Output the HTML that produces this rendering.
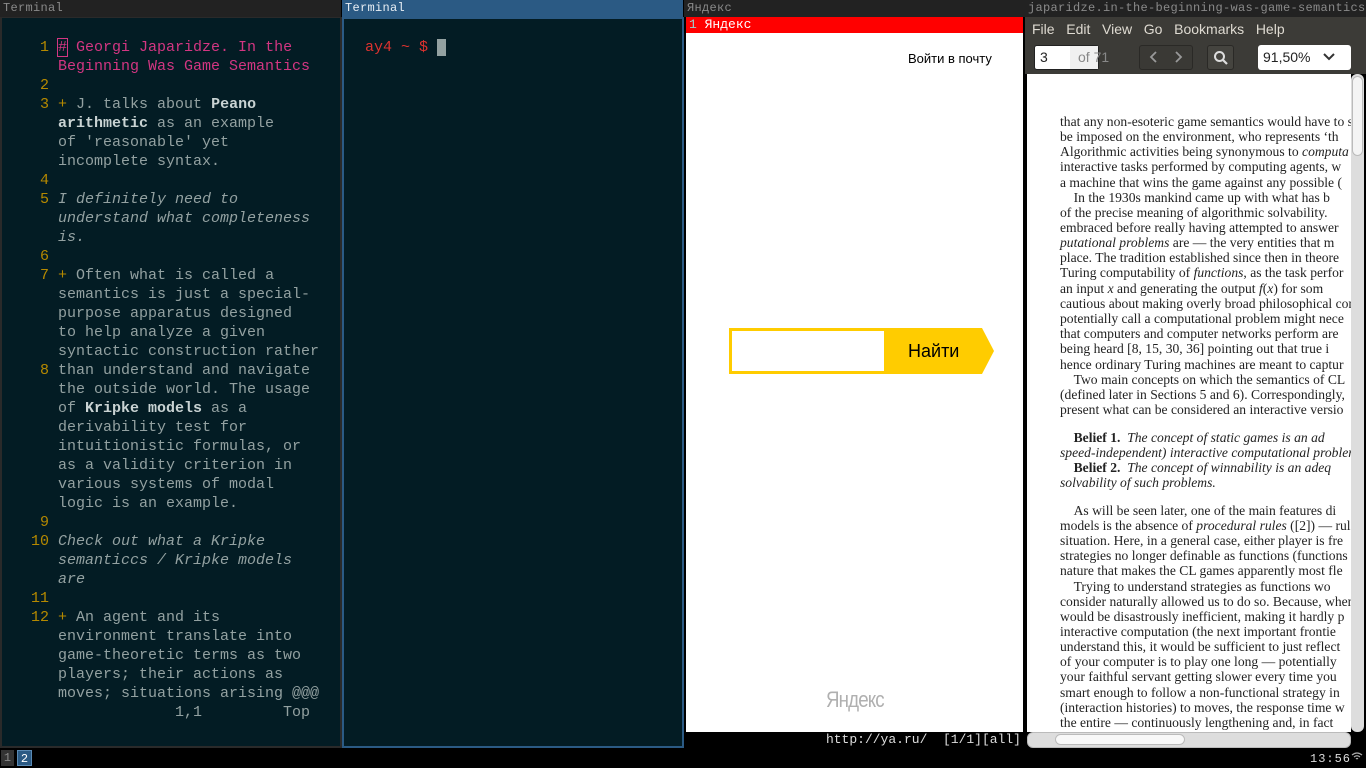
<!DOCTYPE html>
<html><head><meta charset="utf-8"><style>
*{margin:0;padding:0;box-sizing:border-box}
body{width:1366px;height:768px;background:#000;position:relative;overflow:hidden;font-family:"Liberation Sans",sans-serif}
.abs{position:absolute}
.tt{position:absolute;top:0;height:17px;font:12px/16px "Liberation Mono","DejaVu Sans Mono",monospace;color:#8a8a8a;padding-left:3px;background:#222;letter-spacing:0.3px;white-space:nowrap;overflow:hidden}
.term{font:15px/19px "Liberation Mono","DejaVu Sans Mono",monospace;color:#93a1a1;white-space:pre}
.n{color:#b58900}
.p{color:#d33682}
.b{font-weight:bold;color:#c9d3d3}
.i{font-style:italic}
.pdf div{position:absolute;left:1060px;font:13.6px/14px "Liberation Serif","DejaVu Serif",serif;color:#222;white-space:nowrap}
</style></head><body>
<!-- Terminal 1 -->
<div class="tt" style="left:0;width:341px">Terminal</div>
<div class="abs" style="left:0;top:17px;width:342px;height:731px;background:#031c24;border:2px solid #2a2a2a;border-top:1px solid #2a2a2a"></div>
<div class="abs term" style="left:22px;top:38px"><span class="n">  1 </span><span class="p" style="outline:1px solid #d33682">#</span><span class="p"> Georgi Japaridze. In the</span>
<span class="p">    Beginning Was Game Semantics</span>
<span class="n">  2</span>
<span class="n">  3 </span><span class="n">+</span> J. talks about <span class="b">Peano</span>
    <span class="b">arithmetic</span> as an example
    of 'reasonable' yet
    incomplete syntax.
<span class="n">  4</span>
<span class="n">  5 </span><span class="i">I definitely need to</span>
<span class="i">    understand what completeness</span>
<span class="i">    is.</span>
<span class="n">  6</span>
<span class="n">  7 </span><span class="n">+</span> Often what is called a
    semantics is just a special-
    purpose apparatus designed
    to help analyze a given
    syntactic construction rather
<span class="n">  8 </span>than understand and navigate
    the outside world. The usage
    of <span class="b">Kripke models</span> as a
    derivability test for
    intuitionistic formulas, or
    as a validity criterion in
    various systems of modal
    logic is an example.
<span class="n">  9</span>
<span class="n"> 10 </span><span class="i">Check out what a Kripke</span>
<span class="i">    semanticcs / Kripke models</span>
<span class="i">    are</span>
<span class="n"> 11</span>
<span class="n"> 12 </span><span class="n">+</span> An agent and its
    environment translate into
    game-theoretic terms as two
    players; their actions as
    moves; situations arising @@@
                 1,1         Top</div>
<!-- Terminal 2 -->
<div class="tt" style="left:342px;width:341px;background:#2b5a84;color:#e8eef4">Terminal</div>
<div class="abs" style="left:342px;top:17px;width:342px;height:731px;background:#031c24;border:2px solid #2b5a84"></div>
<div class="abs term" style="left:365px;top:38px"><span style="color:#dc322f">ay4 ~ $</span> <span style="background:#93a1a1"> </span></div>
<!-- Yandex -->
<div class="tt" style="left:684px;width:341px">Яндекс</div>
<div class="abs" style="left:686px;top:17px;width:337px;height:715px;background:#fff"></div>
<div class="abs" style="left:686px;top:17px;width:337px;height:16px;background:#f00;font:13px/16px 'Liberation Mono',monospace;color:#fff;padding-left:3px;white-space:pre"><span style="color:#9ccfcf">1</span> Яндекс</div>
<div class="abs" style="left:908px;top:51px;font:13px/16px 'Liberation Sans',sans-serif;color:#000">Войти в почту</div>
<div class="abs" style="left:729px;top:328px;width:158px;height:46px;border:3px solid #fc0;background:#fff"></div>
<div class="abs" style="left:886px;top:328px;width:96px;height:46px;background:#fc0;font:18px/46px 'Liberation Sans',sans-serif;color:#000;padding-left:22px">Найти</div>
<div class="abs" style="left:982px;top:328px;width:0;height:0;border-top:23px solid transparent;border-bottom:23px solid transparent;border-left:12px solid #fc0"></div>
<div class="abs" style="left:826px;top:687px;font:22px/26px 'Liberation Sans',sans-serif;color:#b0b0b0;letter-spacing:-1px;transform:scaleX(0.85);transform-origin:left">Яндекс</div>
<div class="abs" style="left:686px;top:732px;width:337px;height:16px;background:#000;font:13px/16px 'Liberation Mono',monospace;color:#ddd;text-align:right;padding-right:2px;white-space:pre">http://ya.ru/  [1/1][all]</div>
<!-- PDF -->
<div class="tt" style="left:1025px;width:341px">japaridze.in-the-beginning-was-game-semantics.p…</div>
<div class="abs" style="left:1025px;top:17px;width:341px;height:57px;background:#3c3b37"></div>
<div class="abs" style="left:1032px;top:20px;font:14px/18px 'Liberation Sans',sans-serif;color:#dfdbd2;white-space:pre">File   Edit   View   Go   Bookmarks   Help</div>
<div class="abs" style="left:1034px;top:45px;width:64px;height:25px;background:#fff;border-radius:3px;border:1px solid #222;width:65px"></div>
<div class="abs" style="left:1070px;top:46px;width:28px;height:23px;background:#f0f0f0"></div>
<div class="abs" style="left:1040px;top:48px;font:14px/19px 'Liberation Sans',sans-serif;color:#222">3</div>
<div class="abs" style="left:1078px;top:48px;font:14px/19px 'Liberation Sans',sans-serif;color:#888;white-space:nowrap">of 71</div>
<div class="abs" style="left:1139px;top:45px;width:54px;height:25px;background:#3a3935;border:1px solid #2a2926;border-radius:3px"></div>
<svg class="abs" style="left:1144px;top:49px" width="44" height="16"><path d="M12 3L7 8L12 13M32 3L37 8L32 13" fill="none" stroke="#999" stroke-width="1.8"/></svg>
<div class="abs" style="left:1207px;top:45px;width:27px;height:25px;background:#45443f;border:1px solid #2a2926;border-radius:3px"></div>
<svg class="abs" style="left:1213px;top:50px" width="16" height="16"><circle cx="6.5" cy="6.5" r="4.5" fill="none" stroke="#ddd" stroke-width="2"/><path d="M10 10L14 14" stroke="#ddd" stroke-width="2.2"/></svg>
<div class="abs" style="left:1258px;top:45px;width:93px;height:25px;background:#fff;border-radius:3px;font:14px/24px 'Liberation Sans',sans-serif;color:#222;padding-left:5px">91,50%</div>
<svg class="abs" style="left:1322px;top:52px" width="14" height="10"><path d="M2 2L7 7L12 2" fill="none" stroke="#333" stroke-width="2"/></svg>
<div class="abs" style="left:1027px;top:74px;width:324px;height:658px;background:#fff"></div>
<div class="pdf" style="position:absolute;left:0;top:0;width:1351px;height:732px;overflow:hidden;clip-path:inset(74px 0 0 1027px)">
<div style="top:115px">that any non-esoteric game semantics would have to s</div>
<div style="top:130px">be imposed on the environment, who represents ‘th</div>
<div style="top:145px">Algorithmic activities being synonymous to <i>computa</i></div>
<div style="top:160px">interactive tasks performed by computing agents, w</div>
<div style="top:176px">a machine that wins the game against any possible (</div>
<div style="top:191px">&nbsp;&nbsp;&nbsp;&nbsp;In the 1930s mankind came up with what has b</div>
<div style="top:206px">of the precise meaning of algorithmic solvability. &nbsp;&nbsp;</div>
<div style="top:221px">embraced before really having attempted to answer</div>
<div style="top:236px"><i>putational problems</i> are — the very entities that m</div>
<div style="top:251px">place. The tradition established since then in theore</div>
<div style="top:266px">Turing computability of <i>functions</i>, as the task perfor</div>
<div style="top:282px">an input <i>x</i> and generating the output <i>f</i>(<i>x</i>) for som</div>
<div style="top:297px">cautious about making overly broad philosophical con</div>
<div style="top:312px">potentially call a computational problem might nece</div>
<div style="top:327px">that computers and computer networks perform are</div>
<div style="top:342px">being heard [8, 15, 30, 36] pointing out that true i</div>
<div style="top:358px">hence ordinary Turing machines are meant to captur</div>
<div style="top:373px">&nbsp;&nbsp;&nbsp;&nbsp;Two main concepts on which the semantics of CL</div>
<div style="top:388px">(defined later in Sections 5 and 6). Correspondingly, </div>
<div style="top:403px">present what can be considered an interactive versio</div>
<div style="top:431px">&nbsp;&nbsp;&nbsp;&nbsp;<b>Belief 1.</b> &nbsp;<i>The concept of static games is an ad</i></div>
<div style="top:446px"><i>speed-independent) interactive computational problen</i></div>
<div style="top:461px">&nbsp;&nbsp;&nbsp;&nbsp;<b>Belief 2.</b> &nbsp;<i>The concept of winnability is an adeq</i></div>
<div style="top:476px"><i>solvability of such problems.</i></div>
<div style="top:504px">&nbsp;&nbsp;&nbsp;&nbsp;As will be seen later, one of the main features di</div>
<div style="top:519px">models is the absence of <i>procedural rules</i> ([2]) — rules</div>
<div style="top:534px">situation. Here, in a general case, either player is fre</div>
<div style="top:549px">strategies no longer definable as functions (functions</div>
<div style="top:564px">nature that makes the CL games apparently most fle</div>
<div style="top:580px">&nbsp;&nbsp;&nbsp;&nbsp;Trying to understand strategies as functions wo</div>
<div style="top:595px">consider naturally allowed us to do so. Because, when</div>
<div style="top:610px">would be disastrously inefficient, making it hardly p</div>
<div style="top:625px">interactive computation (the next important frontie</div>
<div style="top:640px">understand this, it would be sufficient to just reflect</div>
<div style="top:655px">of your computer is to play one long — potentially</div>
<div style="top:670px">your faithful servant getting slower every time you </div>
<div style="top:686px">smart enough to follow a non-functional strategy in </div>
<div style="top:701px">(interaction histories) to moves, the response time w</div>
<div style="top:716px">the entire — continuously lengthening and, in fact</div>
</div>
<div class="abs" style="left:1351px;top:74px;width:13px;height:658px;background:#ddd;border-radius:6px"></div>
<div class="abs" style="left:1352px;top:76px;width:11px;height:80px;background:#f4f4f4;border-radius:6px;border:1px solid #bbb"></div>
<div class="abs" style="left:1027px;top:732px;width:324px;height:16px;background:#ddd;border-radius:6px;border:1px solid #bbb"></div>
<div class="abs" style="left:1055px;top:734px;width:130px;height:11px;background:#f8f8f8;border-radius:6px;border:1px solid #bbb"></div>
<!-- bottom bar -->
<div class="abs" style="left:1px;top:750px;width:13px;height:16px;background:#333;color:#888;font:12px/16px 'Liberation Mono',monospace;text-align:center">1</div>
<div class="abs" style="left:17px;top:750px;width:15px;height:16px;background:#2b5a84;color:#fff;font:12px/16px 'Liberation Mono',monospace;text-align:center;border:1px solid #5a8ab4">2</div>
<div class="abs" style="left:1310px;top:751px;color:#ddd;font:12px/16px 'Liberation Mono',monospace;letter-spacing:1px">13:56</div>
<svg class="abs" style="left:1351px;top:752px" width="12" height="10"><path d="M1 3Q6 -1 11 3M3 5Q6 2.5 9 5M5 7Q6 6 7 7" fill="none" stroke="#aaa" stroke-width="1.2"/></svg>
</body></html>
